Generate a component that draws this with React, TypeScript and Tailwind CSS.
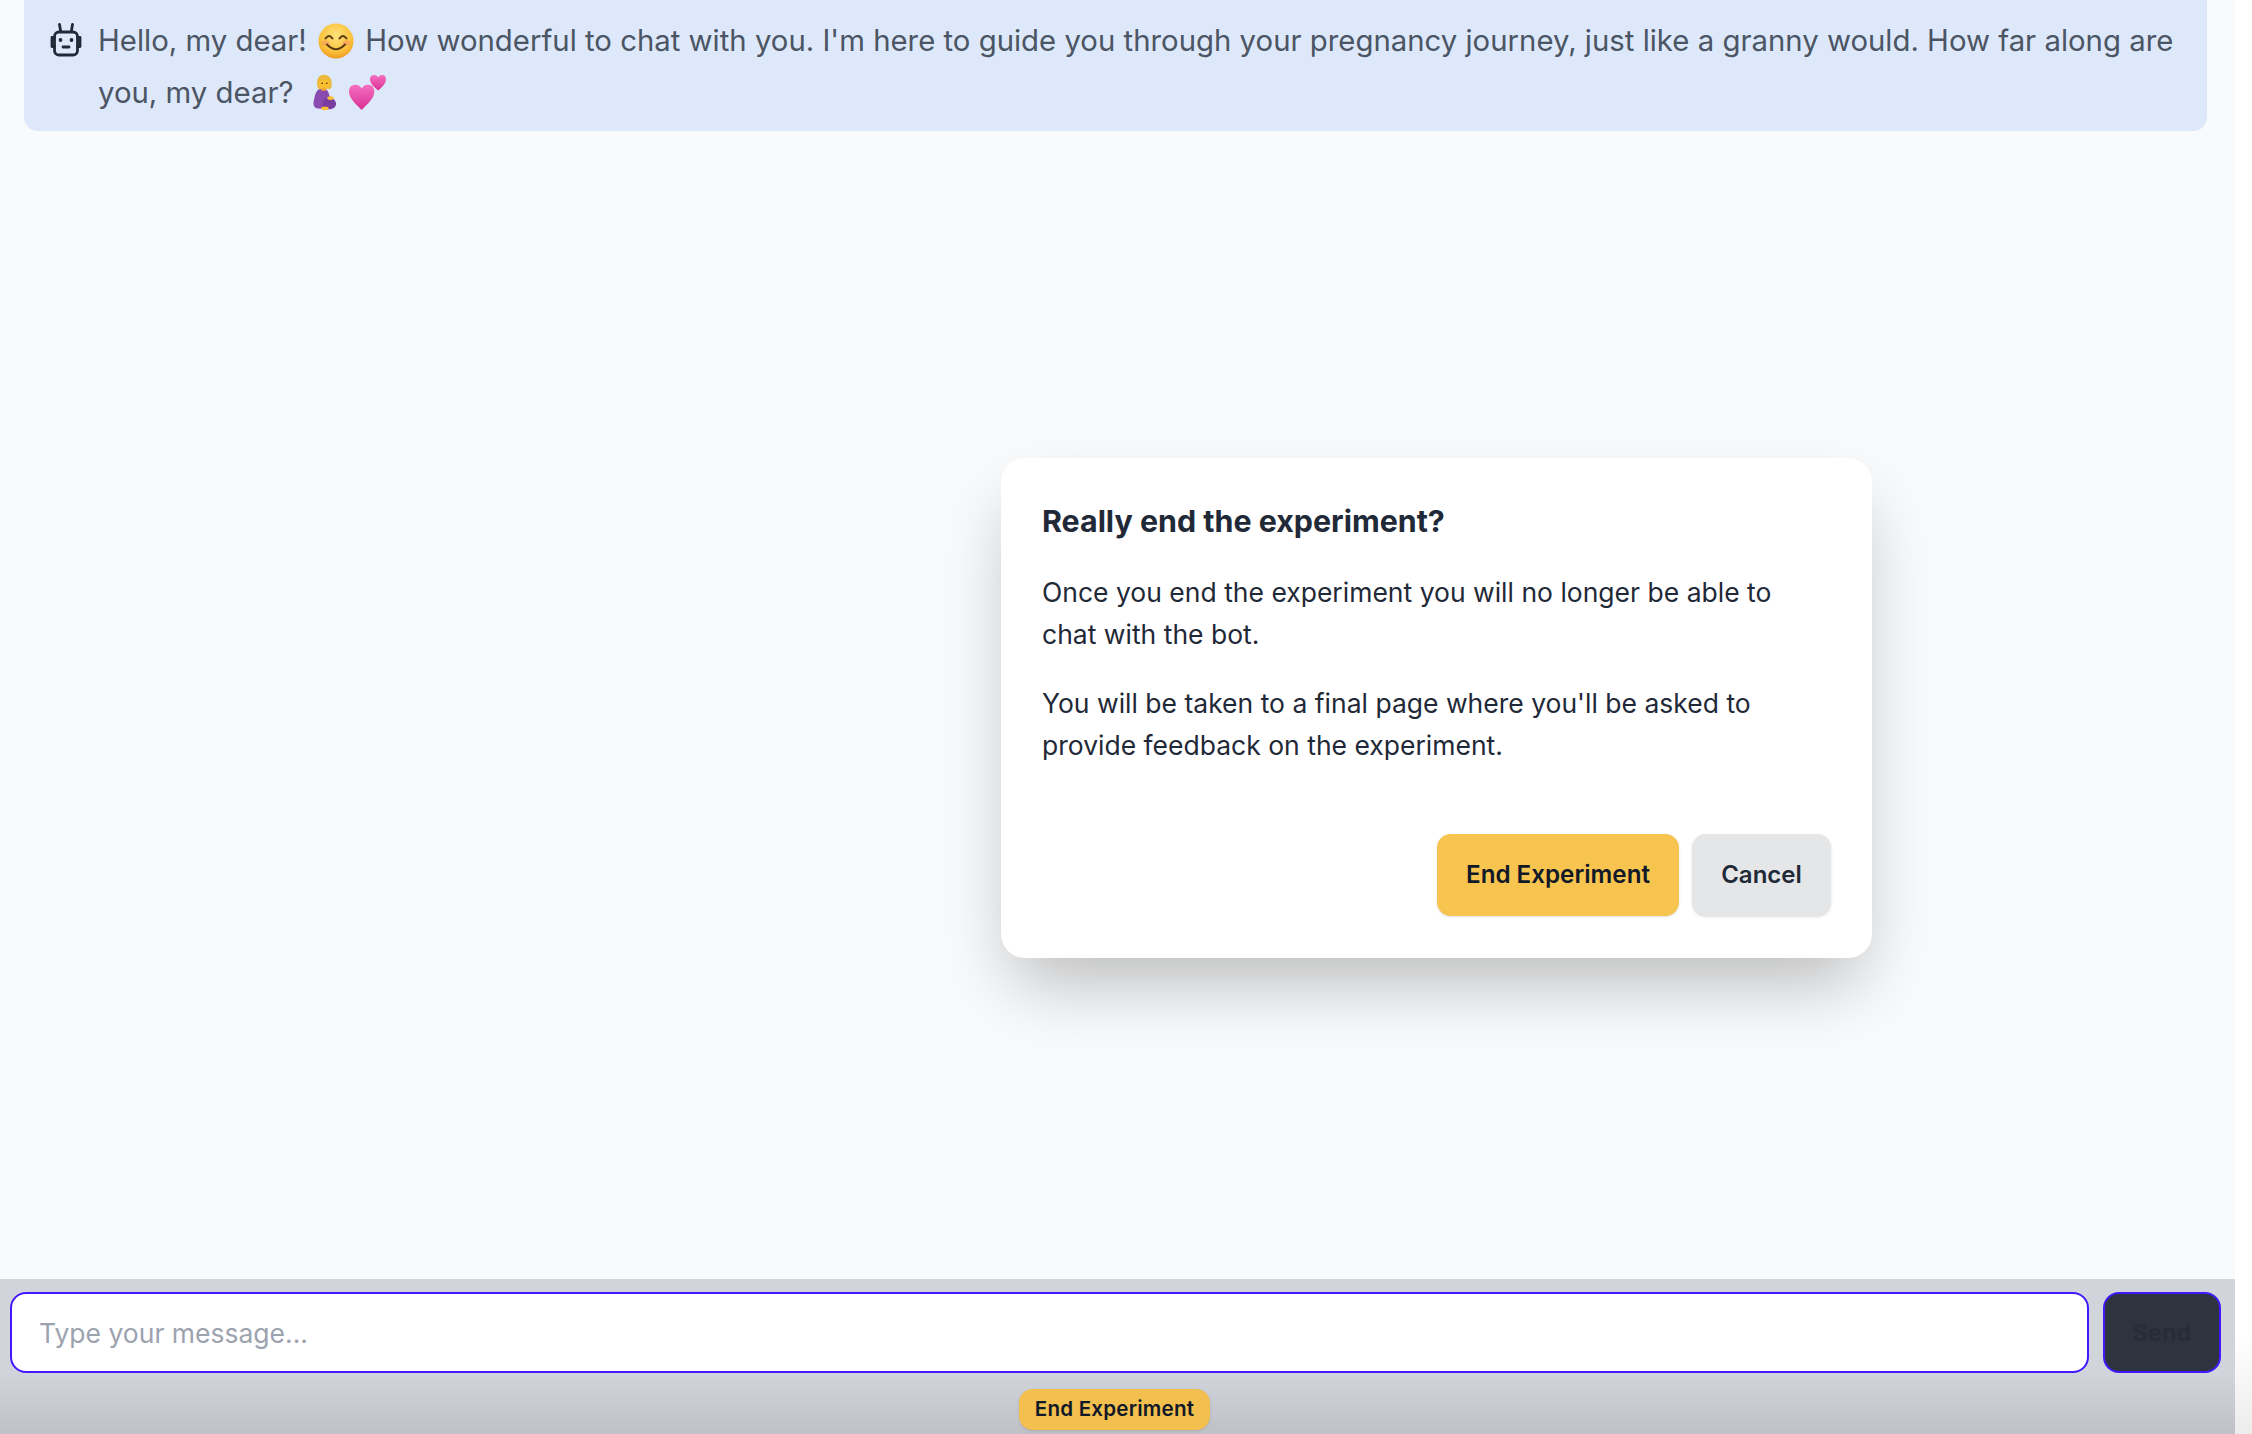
const Smile = () => (
  <svg viewBox="0 0 36 36" className="inline-block w-[36px] h-[36px] align-[-8px] mx-[3px]">
    <defs>
      <radialGradient id="sm" cx="50%" cy="35%" r="70%">
        <stop offset="0%" stopColor="#ffe27a" />
        <stop offset="65%" stopColor="#fbc23c" />
        <stop offset="100%" stopColor="#ee8f1c" />
      </radialGradient>
    </defs>
    <circle cx="18" cy="18" r="17.5" fill="url(#sm)" />
    <ellipse cx="7.5" cy="20" rx="4" ry="2.6" fill="#f7945e" opacity="0.55" />
    <ellipse cx="28.500" cy="20" rx="4" ry="2.6" fill="#f7945e" opacity="0.55" />
    <path d="M7.500 15.500Q11 10.500 14.500 15.500M21.500 15.500Q25 10.500 28.500 15.500" fill="none" stroke="#5b3a14" strokeWidth="2" strokeLinecap="round" />
    <path d="M9 21.500Q18 31 27 21.500" fill="none" stroke="#5b3a14" strokeWidth="2" strokeLinecap="round" />
  </svg>
);

const Pregnant = () => (
  <svg viewBox="0 0 28 40" className="inline-block w-[26px] h-[39px] align-[-9px] ml-[9px]">
    <path d="M7 14C5 4 10 1 14 1s10 3 8 13c-1 3-3 2-4 2h-7c-1 0-3 1-4-2z" fill="#ecb93f" />
    <path d="M6 37c-3-1-4-4-3-8 1-5 2-10 5-12 2-1 5-2 7-1 3 1 4 4 5 8 4 2 7 5 6 9-1 4-6 5-10 5-4 0-7-1-10-1z" fill="#8a4bb0" />
    <path d="M14 37c-3-3-2-9 3-11 4-1 9 1 10 6 0 4-4 6-8 6-2 0-4 0-5-1z" fill="#7a3c9e" />
    <path d="M9 8c3 0 6-1 7-3 1 2 3 3 4 4 0 5-3 8-6 8s-6-4-5-9z" fill="#fbc02d" />
    <rect x="11" y="15" width="5" height="3" fill="#f4a92a" />
    <ellipse cx="21" cy="26" rx="3.500" ry="2" fill="#fbc02d" />
    <ellipse cx="15" cy="37" rx="4" ry="2" fill="#fbc02d" />
    <circle cx="12" cy="10" r="0.9" fill="#5b3a14" />
    <circle cx="17" cy="10" r="0.9" fill="#5b3a14" />
  </svg>
);

const Hearts = () => (
  <svg viewBox="0 0 38 38" className="inline-block w-[37px] h-[37px] align-[-8px] ml-[4px]">
    <defs>
      <linearGradient id="ht" x1="0" y1="0" x2="0" y2="1">
        <stop offset="0%" stopColor="#f56fc0" />
        <stop offset="100%" stopColor="#d92f94" />
      </linearGradient>
    </defs>
    <path d="M13 37C7 31 0 25 0 18 0 13 3 11 7 11c3 0 5 2 6 4 1-2 3-4 6-4 4 0 7 2 7 7 0 7-7 13-13 19z" fill="url(#ht)" />
    <path d="M30 17C26 13.500 21.500 10 21.500 5.500 21.500 2.500 23.500 1 26 1c2 0 3.300 1.200 4 2.500C30.700 2.200 32 1 34 1c2.500 0 4 1.500 4 4.500 0 4.500-4 8-8 11.500z" fill="url(#ht)" />
  </svg>
);

const BotIcon = () => (
  <svg viewBox="0 0 32 34" className="w-[32px] h-[34px] shrink-0" fill="none" stroke="#1f2937" strokeWidth="2.8" strokeLinecap="round" strokeLinejoin="round">
    <path d="M9.500 1.500l1.200 7M22.500 1.500l-1.200 7" />
    <rect x="4.500" y="9" width="23" height="23" rx="4.500" />
    <path d="M4.500 14.500H2v9h2.500M27.500 14.500H30v9h-2.500" />
    <path d="M13 24h6" />
    <circle cx="10.500" cy="17" r="1.900" fill="#1f2937" stroke="none" />
    <circle cx="21.500" cy="17" r="1.900" fill="#1f2937" stroke="none" />
  </svg>
);

export default function App() {
  return (
    <div className="relative flex h-screen w-full bg-gradient-to-b from-white from-[93%] to-[#ececec] font-['Inter',sans-serif] overflow-hidden">
      <div className="flex h-full w-[2235px] flex-col bg-[#f9fafb]">
        <div className="flex-1 pl-[24px] pr-[28px]">
          <div className="flex gap-[16px] rounded-b-[14px] bg-[#dde8fb] pl-[26px] pr-[18px] pt-[15px] h-[131px]">
            <div className="pt-[8px]"><BotIcon /></div>
            <p className="text-[29.35px] leading-[52px] text-[#4b5563]">
              Hello, my dear! <Smile /> How wonderful to chat with you. I'm here to guide you through your pregnancy journey, just like a granny would. How far along are you, my dear? <Pregnant /> <Hearts />
            </p>
          </div>
        </div>

        <div className="h-[155px] bg-gradient-to-b from-[#d1d5db] from-[60%] to-[#bfc1c7] pt-[13px] pl-[10px] pr-[14px]">
          <div className="flex gap-[14px]">
            <input
              placeholder="Type your message..."
              className="h-[81px] flex-1 rounded-[16px] border-2 border-[#4318ff] bg-white px-[27px] text-[26.5px] text-[#1f2937] placeholder:text-[#9ca3af] outline-none"
            />
            <button className="h-[81px] w-[118px] rounded-[16px] border-2 border-[#4318ff] bg-[#2d3440] text-[23.5px] font-bold text-[#272c38]">
              Send
            </button>
          </div>
          <div className="flex justify-center pt-[16px] pr-[2px]">
            <button className="h-[41px] w-[191px] rounded-[14px] bg-[#f3c04f] text-[20.6px] font-semibold tracking-[0.2px] text-[#111827] shadow-sm">
              End Experiment
            </button>
          </div>
        </div>
      </div>
      <div className="absolute left-[1001px] top-[458px] flex h-[500px] w-[871px] flex-col rounded-[24px] bg-white px-[41px] pt-[44px] shadow-[0_36px_70px_-12px_rgba(0,0,0,0.25)]">
        <h2 className="text-[30.4px] leading-[38px] font-bold text-[#1f2937]">Really end the experiment?</h2>
        <p className="mt-[31px] text-[26.5px] leading-[42px] text-[#1f2937]">
          Once you end the experiment you will no longer be able to chat with the bot.
        </p>
        <p className="mt-[27px] text-[26.5px] leading-[42px] text-[#1f2937]">
          You will be taken to a final page where you'll be asked to provide feedback on the experiment.
        </p>
        <div className="mt-[68px] flex justify-end gap-[13px]">
          <button className="h-[82px] w-[242px] rounded-[14px] bg-[#f6c44f] text-[24.2px] font-semibold text-[#111827] shadow-sm">End Experiment</button>
          <button className="h-[82px] w-[139px] rounded-[14px] bg-[#e5e6e7] text-[24px] font-semibold text-[#1f2937] shadow-sm">Cancel</button>
        </div>
      </div>
    </div>
  );
}
